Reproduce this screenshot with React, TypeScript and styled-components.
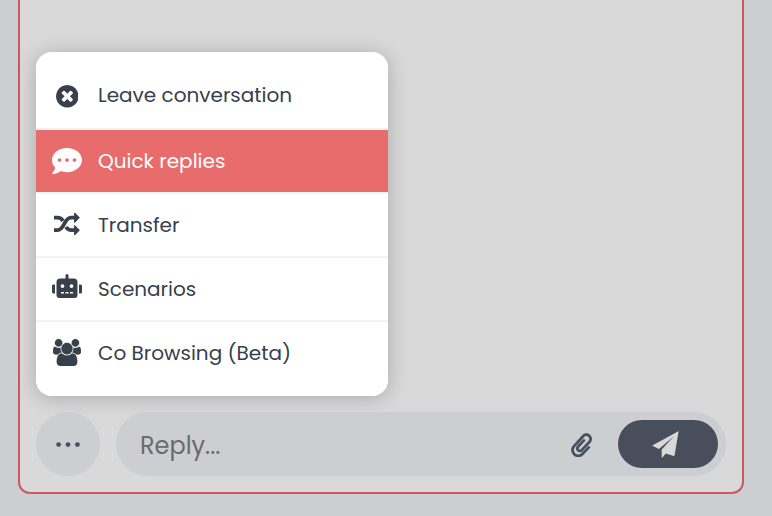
import React from "react";
import styled, { createGlobalStyle } from "styled-components";
import { FaCommentDots, FaRobot } from "react-icons/fa";

const GlobalStyle = createGlobalStyle`
  * { box-sizing: border-box; }
  body {
    margin: 0;
    overflow: hidden;
    background: #cdced2;
    font-family: Poppins, Inter, sans-serif;
    -webkit-font-smoothing: antialiased;
  }
`;

const Page = styled.main`
  height: 516px;
  padding: 0 28px 22px 18px;
`;

const ChatPanel = styled.section`
  display: flex;
  flex-direction: column;
  justify-content: flex-end;
  height: 494px;
  padding: 0 16px 16px;
  background: #d9d9d9;
  border: 2px solid #c85a5c;
  border-top: 0;
  border-radius: 0 0 12px 12px;
`;

const Menu = styled.nav`
  width: 352px;
  height: 344px;
  margin-bottom: 16px;
  overflow: hidden;
  background: #fff;
  border-radius: 16px;
  box-shadow: 0 2px 20px rgba(0, 0, 0, 0.22);
`;

const MenuItem = styled.button<{ $active?: boolean }>`
  display: flex;
  align-items: center;
  width: 100%;
  height: 64px;
  padding: 0 16px;
  border: 0;
  border-bottom: 2px solid #f3f3f4;
  background: ${(p) => (p.$active ? "#e86c6c" : "#fff")};
  color: ${(p) => (p.$active ? "#fff" : "#37404b")};
  background-clip: padding-box;
  font: inherit;
  text-align: left;

  &:first-child { height: 78px; padding-top: 10px; }
  &:last-child { height: 74px; padding-bottom: 12px; border-bottom: 0; }
`;

const IconSlot = styled.span<{ $shift?: number }>`
  display: flex;
  align-items: center;
  justify-content: center;
  width: 30px;
  height: 30px;
  margin-right: 16px;

  svg {
    display: block;
    flex: none;
    margin-top: ${(p) => (p.$shift ?? 0) * 2}px;
  }
`;

const Label = styled.span`
  font-size: 20px;
  line-height: 30px;
  white-space: nowrap;
`;

const Composer = styled.div`
  display: flex;
  gap: 16px;
  height: 64px;
`;

const MoreButton = styled.button`
  display: flex;
  align-items: center;
  justify-content: center;
  width: 64px;
  height: 64px;
  padding: 0;
  border: 0;
  border-radius: 50%;
  background: #cdced2;
  color: #465160;
`;

const ReplyField = styled.div`
  display: flex;
  align-items: center;
  width: 610px;
  flex: none;
  padding: 0 8px 0 24px;
  border-radius: 32px;
  background: #cdced2;
  color: #6b6b6b;
`;

const Placeholder = styled.span`
  flex: 1;
  padding-top: 3px;
  font-size: 24px;
`;

const AttachButton = styled.button`
  display: flex;
  margin-right: 26px;
  padding: 1px 0 0;
  border: 0;
  background: transparent;
  color: #465160;
`;

const SendButton = styled.button`
  display: flex;
  align-items: center;
  justify-content: center;
  width: 100px;
  height: 48px;
  padding: 0 5px 0 0;
  border: 0;
  border-radius: 24px;
  background: #484e5c;
  color: #d9d9d9;
`;

const CloseIcon = () => (
  <svg width="22.6" height="22.6" viewBox="128 128 1536 1536" fill="currentColor">
    <path d="M1277 1122q0-26-19-45l-181-181 181-181q19-19 19-45 0-27-19-46l-90-90q-19-19-46-19-26 0-45 19l-181 181-181-181q-19-19-45-19-27 0-46 19l-90 90q-19 19-19 46 0 26 19 45l181 181-181 181q-19 19-19 45 0 27 19 46l90 90q19 19 46 19 26 0 45-19l181-181 181 181q19 19 45 19 27 0 46-19l90-90q19-19 19-46zm387-226q0 209-103 385.5t-279.5 279.5-385.5 103-385.5-103-279.5-279.5-103-385.5 103-385.5 279.5-279.5 385.5-103 385.5 103 279.5 279.5 103 385.5z" />
  </svg>
);

const ShuffleIcon = () => (
  <svg width="26" height="24" viewBox="0 0 26 24" fill="none" stroke="currentColor" strokeWidth="3.8">
    <path d="M0 18.2H3.5C10.5 18.2 10 5.7 17 5.7H21" />
    <path d="M0 5.7H3.5Q7 5.7 9.1 8.9M11.9 15Q14 18.2 17.5 18.2H21" />
    <path d="M20.6.9 25.4 5.7 20.6 10.5ZM20.6 13.4 25.4 18.2 20.6 23Z" fill="currentColor" strokeWidth="1" strokeLinejoin="round" />
  </svg>
);

const GroupIcon = () => (
  <svg width="28" height="27" viewBox="0 0 1920 1792" preserveAspectRatio="none" fill="currentColor" stroke="currentColor" strokeWidth="16">
    <path d="M593 896q-162 5-265 128h-134q-82 0-138-40.5t-56-118.5q0-353 124-353 6 0 43.5 21t97.5 42.5 119 21.5q67 0 133-23-5 37-5 66 0 139 81 256zm1071 637q0 120-73 189.5t-194 69.5h-874q-121 0-194-69.5t-73-189.5q0-53 3.5-103.5t14-109 26.5-108.5 43-97.5 62-81 85.5-53.5 111.5-20q10 0 43 21.5t73 48 107 48 135 21.5 135-21.5 107-48 73-48 43-21.5q61 0 111.5 20t85.5 53.5 62 81 43 97.5 26.5 108.5 14 109 3.5 103.5zm-1024-1277q0 106-75 181t-181 75-181-75-75-181 75-181 181-75 181 75 75 181zm704 384q0 159-112.5 271.5t-271.5 112.5-271.5-112.5-112.5-271.5 112.5-271.5 271.5-112.5 271.5 112.5 112.5 271.5zm576 225q0 78-56 118.5t-138 40.5h-134q-103-123-265-128 81-117 81-256 0-29-5-66 66 23 133 23 59 0 119-21.5t97.5-42.5 43.5-21q124 0 124 353zm-128-609q0 106-75 181t-181 75-181-75-75-181 75-181 181-75 181 75 75 181z" />
  </svg>
);

const MoreIcon = () => (
  <svg width="24" height="6" viewBox="0 0 24 6" fill="currentColor">
    <circle cx="2.6" cy="3.6" r="2.4" />
    <circle cx="12" cy="3.6" r="2.4" />
    <circle cx="21.4" cy="3.6" r="2.4" />
  </svg>
);

const PaperclipIcon = () => (
  <svg width="21" height="24" viewBox="0 0 21 24" fill="none" stroke="currentColor" strokeWidth="2.8" strokeLinecap="round">
    <path d="M17.8 14.4 11.6 20.8A5.3 5.3 0 0 1 2.9 13.4L12.1 3.2A4.2 4.2 0 0 1 18.6 8.8L10.7 17.1A2.4 2.4 0 0 1 7 13.7L12.9 7.4" />
  </svg>
);

const SendIcon = () => (
  <svg width="27" height="27" viewBox="0 0 27 27" fill="currentColor">
    <path d="M25.9.4.8 14.2Q.3 14.6.8 15.1L6.4 17.8Q7 18.1 7.5 17.6L21.7 5.6 9.7 18.4V25.8Q9.8 26.8 10.6 26.2L13.8 22.5 21.7 24.9Q22.4 25 22.6 24.3L26.5.9Q26.6.1 25.9.4Z" />
  </svg>
);

const items = [
  { label: "Leave conversation", icon: <CloseIcon />, shift: 1.3 },
  { label: "Quick replies", icon: <FaCommentDots size={30} />, active: true },
  { label: "Transfer", icon: <ShuffleIcon />, shift: -1 },
  { label: "Scenarios", icon: <FaRobot size={30} />, shift: -3.5 },
  { label: "Co Browsing (Beta)", icon: <GroupIcon />, shift: -0.5 },
];

export default function App() {
  return (
    <>
      <GlobalStyle />
      <Page>
        <ChatPanel>
          <Menu>
            {items.map((item) => (
              <MenuItem key={item.label} $active={item.active}>
                <IconSlot $shift={item.shift}>{item.icon}</IconSlot>
                <Label>{item.label}</Label>
              </MenuItem>
            ))}
          </Menu>
          <Composer>
            <MoreButton aria-label="More actions"><MoreIcon /></MoreButton>
            <ReplyField>
              <Placeholder>Reply...</Placeholder>
              <AttachButton aria-label="Attach file"><PaperclipIcon /></AttachButton>
              <SendButton aria-label="Send"><SendIcon /></SendButton>
            </ReplyField>
          </Composer>
        </ChatPanel>
      </Page>
    </>
  );
}
